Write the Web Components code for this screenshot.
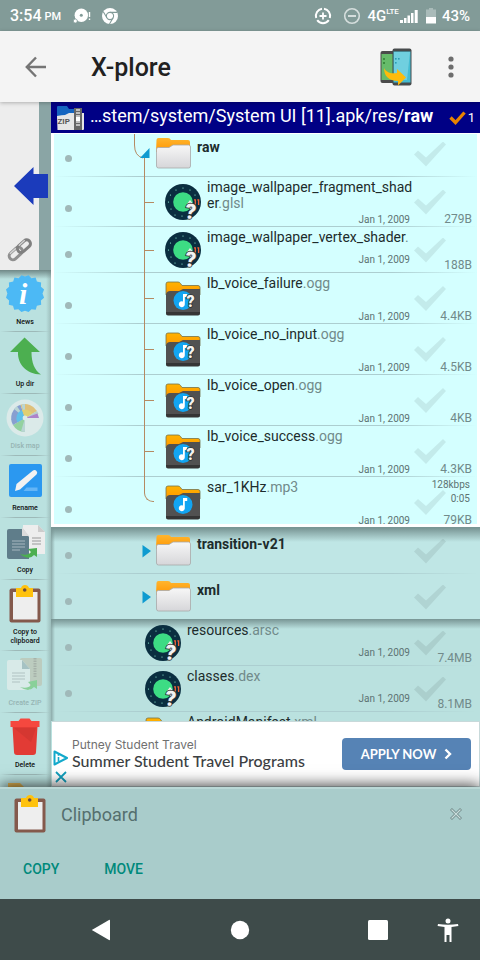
<!DOCTYPE html>
<html lang="en">
<head>
<meta charset="utf-8">
<meta name="viewport" content="width=device-width, initial-scale=1">
<title>X-plore</title>
<style>
html, body { margin: 0; height: 100%; }
body { font-family: Roboto, "Liberation Sans", sans-serif; background: #bae1df; color: #222; overflow: hidden; }
</style>
</head>
<body>
<xp-app></xp-app>
<script>
const define = (name, html, setup) => {
  const t = document.createElement('template');
  t.innerHTML = html;
  customElements.define(name, class extends HTMLElement {
    connectedCallback() {
      if (this.shadowRoot) return;
      this.attachShadow({ mode: 'open' }).append(t.content.cloneNode(true));
      if (setup) setup(this, this.shadowRoot);
    }
  });
};

const clipboard = `<rect x="3.500" y="3.500" width="31" height="34" rx="2" fill="#84594c"/><rect x="7" y="7" width="24.500" height="27.500" fill="#eee"/><path d="M10 3h5a4.200 4.200 0 0 1 8 0h4v9H10z" fill="#ffc20e"/><circle cx="18.700" cy="5" r="1.800" fill="#6b4b3f"/>`;
const sheetLines = `<path d="M0 0h13M0 3h13M0 6h13M0 9h8" stroke-width="1.200" fill="none"/>`;
const question = (x, y, s) => `<text x="${x}" y="${y}" font-family="Roboto" font-size="${s}" font-weight="900" fill="#f2f2f2" stroke="#333" stroke-width="1.600" paint-order="stroke">?</text>`;
const musicFolder = `<defs><linearGradient id="a" x2="0" y2="1"><stop stop-color="#ffb300"/><stop offset="1" stop-color="#ff9800"/></linearGradient></defs>
  <path d="M1 3q0-2 2-2h10q1.500 0 2.500 1.400L17 4.500h16q2 0 2 2V14H1z" fill="url(#a)" stroke="#73714a" stroke-width=".8"/>
  <path d="M1 13q1-3 4-3h9l4-2h17v24q0 2-2 2H3q-2 0-2-2z" fill="#515151"/><path d="M1 31h34v1q0 2.500-2 2.500H3q-2 0-2-2.500z" fill="#353535"/>
  <circle cx="18" cy="19.500" r="9.500" fill="#12a5f2"/><path d="M18 13h4.200v3h-2.400v7a3 3 0 1 1-1.800-2.500z" fill="#fff"/>`;

const ICONS = {
  data: ['0 0 18 18', `<path d="M8 1.800A7.200 7.200 0 0 0 2.200 11M3.200 13.200a7.200 7.200 0 0 0 11.600 0M15.800 11A7.200 7.200 0 0 0 10 1.800" fill="none" stroke="#fff" stroke-width="2"/><path d="M9 5.500v7M5.500 9h7" stroke="#fff" stroke-width="1.800"/>`],
  minus: ['0 0 18 18', `<circle cx="9" cy="9" r="7.300" fill="none" stroke="#d5dedd" stroke-width="1.600"/><path d="M5 9h8" stroke="#d5dedd" stroke-width="2"/>`],
  disc: ['0 0 18 16', `<circle cx="8.300" cy="7.300" r="6.700" fill="#fff"/><circle cx="8.300" cy="7.300" r="1.500" fill="#829b98"/><circle cx="2.300" cy="13" r="2" fill="#fff" stroke="#829b98" stroke-width=".7"/><path d="M16.500 4v5M16.500 10.500v1.500" stroke="#fff" stroke-width="1.400"/>`],
  chrome: ['0 0 18 18', `<circle cx="9" cy="9" r="8" fill="#fff"/><circle cx="9" cy="9" r="3.600" fill="#fff" stroke="#829b98" stroke-width="1.100"/><path d="M9 5.400h7.200M5.900 10.800 2.300 4.800M12.100 10.800 8.500 17" stroke="#829b98" stroke-width="1.100"/>`],
  signal: ['0 0 19 14', `<path d="M0 11h3v3H0zM4 9h2.500v5H4zM7.500 6.500H10V14H7.500zM11 4h2.500v10H11zM14.700 1h3V14h-3z" fill="#fff"/>`],
  battery: ['0 0 10 16', `<path d="M3 0h4v1.500h3V9H0V1.500h3z" fill="#a9bbb9"/><path d="M0 9h10v6.500H0z" fill="#fff"/>`],
  back: ['0 0 22 22', `<path d="M21 11H2M11 1.500 1.800 11 11 20.500" fill="none" stroke="#757575" stroke-width="2.400"/>`],
  phones: ['0 0 32 38', `<rect x=".5" y="3" width="17" height="32" rx="2" fill="#4b4b4b"/><rect x="1.500" y="6" width="15" height="26" fill="#66bb6a"/><rect x="12.500" y=".5" width="19" height="37" rx="2" fill="#474b4c"/><rect x="13.500" y="3.500" width="17" height="31" fill="#45bcd2"/><path d="M14 4h16L27 32H14z" fill="#70cfdf"/><g fill="#2a9db5"><rect x="15" y="10" width="1.600" height="1.600"/><rect x="18" y="10" width="1.600" height="1.600"/><rect x="15" y="14" width="1.600" height="1.600"/></g><path d="M3 11h2M3 15h2" stroke="#2e7d32" stroke-width="1.500"/><path d="M4 20c2 4 6 6 13 5v-4l9 8.500-8 8v-4.500C9 33 4 28 4 20z" fill="#fdbb0b"/>`],
  more: ['0 0 6 22', `<g fill="#6d6d6d"><circle cx="3" cy="3" r="2.600"/><circle cx="3" cy="11" r="2.600"/><circle cx="3" cy="19" r="2.600"/></g>`],
  zip: ['0 0 29 26', `<path d="M1 2q0-1 1-1h9l2 3h13v10H1z" fill="#1565c0"/><path d="M1 11q5-1 8-1l4-2h15v16q0 1-1 1H1.500z" fill="#e6e6e6"/><path d="M18 3h8v22h-8z" fill="#666"/><path d="M20 5h4M20 8h4M20 11h4M20 17h4M20 20h4" stroke="#ddd" stroke-width="1.600"/><path d="M20 12h4v4h-4z" fill="#fff"/><text x="1.500" y="19" font-family="Roboto" font-size="8" font-weight="700" fill="#555">ZIP</text>`],
  tick: ['0 0 17 14', `<path d="M1.500 6.500 6.500 11.500 15.500 1.500" fill="none" stroke="#e88300" stroke-width="3.300"/>`],
  link: ['0 0 28 26', `<g fill="none" transform="rotate(-42 14 13)"><rect x="1" y="9" width="15" height="7.500" rx="3.700" stroke="#909090" stroke-width="3"/><rect x="12" y="9" width="15" height="7.500" rx="3.700" stroke="#808080" stroke-width="3"/><path d="M4 9h8M16 9h8" stroke="#d4d4d4" stroke-width="1.400"/></g>`],
  arrow: ['0 0 34 38', `<path d="M0 19 19.500 0v7H34v24H19.500v7z" fill="#1b3bbb"/>`],
  news: ['0 0 38 38', `<path d="m19 1.500 3.600-1.200 2.800 3 4.200-.8 1.300 4 4.200 1-.2 4.300 3.200 2.800-1.600 4 1.600 4.200-3.200 2.600.3 4.300-4.300 1.100-1.200 4-4.200-.6-2.900 2.900-3.600-1.300-3.600 1.300-3-2.900-4.200.6-1.200-4-4.200-1.100.3-4.300L0 22.800l1.400-4.200L0 14.600l3.100-2.800-.2-4.300 4.300-1 1.200-4 4.200.8 2.900-3z" fill="#4cb9f5"/><text x="13" y="29" font-family="Liberation Serif" font-size="30" font-style="italic" font-weight="700" fill="#fff">i</text>`],
  up: ['0 0 38 38', `<path d="M18.500.5 34 15h-8.500c0 11 3 18 9.500 22.500C20 37 11.500 27 12 15H4z" fill="#4caf50"/>`],
  map: ['0 0 38 38', `<circle cx="19" cy="19" r="18.500" fill="#dbeae9"/><path d="M19 19V33A14 14 0 0 1 7 26z" fill="#93d1a0"/><path d="M19 19 7 26A14 14 0 0 1 14.500 5.800z" fill="#879fd0"/><path d="M19 19 14.500 5.800A14 14 0 0 1 31 12z" fill="#dfc07a"/><path d="M19 19 31 12a14 14 0 0 1 1.500 3z" fill="#b9cfcc"/><path d="M19 19 8 10l3-2.700zM19 19 15.500 5.500 19 5zM19 19V33l-4-.6z" fill="#b9d5d4"/><path d="m19 19-7.600 4.200A8.600 8.600 0 0 1 16 11z" fill="#5ec0ea"/><path d="M19 19 16 11a8.600 8.600 0 0 1 10.400 3.600z" fill="#e0cf72"/><path d="M19 19 31.500 14.500 33 19z" fill="#ad83ca"/><circle cx="19" cy="19" r="2.400" fill="#dbeae9"/>`],
  rename: ['0 0 38 38', `<rect x="3" y="3" width="33" height="33" rx="2" fill="#2b98f0"/><path d="m9.500 28 1-5L27 9.500q2-1.300 3.500.5t0 3.500L14 28.500l-5 1.500z" fill="#f2f2f2"/><path d="M20.500 26.500h11V30H17.500z" fill="#64b5f6"/>`],
  copy: ['0 0 38 38', `<path d="M17 2h15l7 7v22H17z" fill="#ededed"/><path d="M32 2v7h7z" fill="#ccc"/><path d="M26 15h9M26 18h9M26 21h9" stroke="#999"/><path d="M3 6h14l6 8v22H3q-2 0-2-2V8q0-2 2-2z" fill="#5f7d8a"/><path d="M16 4v9h7z" fill="#dcdcdc"/><g transform="translate(6 18)" stroke="#a7b8bf">${sheetLines}</g><path d="M14 31q8 2 11-2l-3-3 9-1v9l-3-2q-5 6-14-1z" fill="#4caf50"/>`],
  clipboard: ['0 0 38 38', clipboard],
  zipmake: ['0 0 38 38', `<rect x="14" y="2" width="22" height="28" rx="2" fill="#bcccbf"/><path d="M29 2v20" stroke="#a6b2aa" stroke-width="3" stroke-dasharray="1.500 1"/><path d="M3 4h13l8 9v21H3q-2 0-2-2V6q0-2 2-2z" fill="#d8eae8"/><path d="M16 4v9h8z" fill="#a5c2c3"/><g transform="translate(6 17)" stroke="#b0c2c2">${sheetLines}</g><path d="M14 31q8 2 11-2l-3-3 9-2v9l-3-2q-5 6-14 0z" fill="#89d099"/>`],
  trash: ['0 0 38 38', `<path d="M6.500 8h25L30 34q0 3-3 3H11q-3 0-3-3z" fill="#e23b35"/><path d="m8 10 17 14L30 10z" fill="#c7332e" opacity=".5"/><path d="M4.500 3h8l2-2.500h9l2 2.500h8v6h-29z" fill="#f5483f"/>`],
  folderbit: ['0 0 38 38', `<path d="M2 3h12l5 5h17v14H2z" fill="#e9ba57"/>`],
  folder: ['0 0 36 36', `<defs><linearGradient id="o" x2="0" y2="1"><stop stop-color="#ffb52e"/><stop offset="1" stop-color="#ff9500"/></linearGradient><linearGradient id="w" x2="0" y2="1"><stop stop-color="#f7f7f7"/><stop offset="1" stop-color="#d6d6d9"/></linearGradient></defs><path d="M1.500 4q0-2 2-2h9.500q2 0 3 2h17q2 0 2 2v10h-34z" fill="url(#o)"/><path d="M1.500 13q0-1.500 2-1.500H14L18 9h15.500q2 0 2 2v19q0 2-2 2h-30q-2 0-2-2z" fill="url(#w)" stroke="#a8a8a8" stroke-width=".8"/>`],
  android: ['0 0 36 36', `<circle cx="18" cy="18" r="18" fill="#0a2e40"/><g fill="#9fd"><circle cx="18" cy="4" r=".6"/><circle cx="11" cy="6" r=".6"/><circle cx="25" cy="6" r=".6"/><circle cx="5.500" cy="11" r=".6"/><circle cx="3.500" cy="18" r=".6"/><circle cx="6" cy="25" r=".6"/><circle cx="10" cy="31" r=".6"/><circle cx="17" cy="32" r=".6"/><circle cx="30" cy="11" r=".6"/></g><circle cx="18" cy="18" r="9.800" fill="#3ddc84"/><path d="M29 15.800h1.300V21M32.300 15.800h1.300V21" fill="none" stroke="#ef6136" stroke-width="1.300"/><path d="M22 20 25 16l4 5v5h-3z" fill="#eee"/><g transform="rotate(8 27 26)">${question(20.5, 35, 21)}</g>`],
  audioq: ['0 0 36 36', musicFolder + question(21.5, 25.5, 16)],
  audio: ['0 0 36 36', musicFolder],
  adinfo: ['0 0 16 16', `<path d="M1.500 1.500 14 8 1.500 14.500z" fill="#fff" stroke="#12a9cb" stroke-width="2" stroke-linejoin="round"/><path d="M5.500 7v4.500M5.500 4v1.800" stroke="#12a9cb" stroke-width="1.600"/>`],
  adclose: ['0 0 12 12', `<path d="m1 1 10 10M11 1 1 11" stroke="#129fbd" stroke-width="1.800"/>`],
  chevron: ['0 0 8 12', `<path d="m1.500 1.500 4.500 4.500-4.500 4.500" fill="none" stroke="#fff" stroke-width="2.400"/>`],
  close: ['0 0 12 12', `<path d="m1 1 10 10M11 1 1 11" stroke="#6e8786" stroke-width="2.800"/><path d="m1.500 1.500 9 9M10.500 1.500l-9 9" stroke="#c9dddc" stroke-width="1.200"/>`],
  navback: ['0 0 20 22', `<path d="M.8 11 18 1q1-.5 1 .5v19q0 1-1 .5z" fill="#fff"/>`],
  navhome: ['0 0 20 20', `<circle cx="10" cy="10" r="9.200" fill="#fff"/>`],
  navrecent: ['0 0 20 20', `<rect width="20" height="20" rx="1.500" fill="#fff"/>`],
  person: ['0 0 22 24', `<circle cx="11" cy="3" r="2.500" fill="#fff"/><path d="M1 6q10 1.500 20 0l.4 2-6.900 1v15h-2v-7h-3v7h-2V9L.6 8z" fill="#fff"/>`]
};

/* Inline SVG glyph, drawn at its own viewBox size */
define('xp-icon', `<style>:host{display:block;flex:none;line-height:0}svg{display:block;overflow:visible}</style><svg aria-hidden="true"></svg>`, (el, root) => {
  const [box, body] = ICONS[el.getAttribute('name')];
  const svg = root.querySelector('svg'), [, , w, h] = box.split(' ');
  svg.setAttribute('viewBox', box);
  svg.setAttribute('width', w);
  svg.setAttribute('height', h);
  svg.innerHTML = body;
});

const makeIcon = name => {
  const icon = document.createElement('xp-icon');
  icon.setAttribute('name', name);
  return icon;
};

define('status-bar', `<style>
:host{display:flex;align-items:center;height:31px;padding:0 10px;background:#829b98;color:#fff;font-size:16px;font-weight:500}
.pm{font-size:11px;margin:2px 12px 0 3px}
.gap{flex:1}
sup{font-size:8px;align-self:flex-start;margin-top:7px;line-height:10px}
</style><span>3:54</span><span class="pm">PM</span><xp-icon name="disc"></xp-icon><xp-icon name="chrome" style="margin-left:10px"></xp-icon>
<span class="gap"></span><xp-icon name="data"></xp-icon><xp-icon name="minus" style="margin:0 6px 0 11px"></xp-icon><span style="font-size:15px">4G</span><sup>LTE</sup><xp-icon name="signal" style="margin:0 7px 0 1px"></xp-icon><xp-icon name="battery"></xp-icon><span style="margin-left:6px;font-size:15px">43%</span>`);

define('title-bar', `<style>
:host{display:flex;align-items:center;height:71px;background:#f4f4f4;box-shadow:0 1px 4px #0004;z-index:2;padding:0 18px 0 17px}
button{border:0;background:none;padding:8px;margin:0;display:block}
h1{flex:1;margin:2px 0 0 36px;font-size:25px;font-weight:500;color:#212121}
</style><button aria-label="Back"><xp-icon name="back"></xp-icon></button><h1><slot></slot></h1><button aria-label="Other panel"><xp-icon name="phones"></xp-icon></button><button aria-label="More options" style="margin-left:20px"><xp-icon name="more"></xp-icon></button>`);

define('side-panel', `<style>
:host{display:block}
button{width:100%;height:168px;border:0;margin:0;padding:0 3px 7px 6px;box-sizing:border-box;display:grid;grid-template-rows:1fr auto;background:linear-gradient(to right,#ededed 39px,#8aa5a5 39px)}
.a{align-self:end;justify-self:end;margin-bottom:32px}
</style><button aria-label="Switch panel"><xp-icon class="a" name="arrow"></xp-icon><xp-icon name="link"></xp-icon></button>`);

define('tool-button', `<style>
:host{display:block;background:linear-gradient(to right,transparent,#9db9b8 30%,#9db9b8 70%,transparent) bottom/100% 1px no-repeat}
button{all:unset;box-sizing:border-box;width:100%;display:flex;flex-direction:column;align-items:center;padding:5px 1px 5px 0;font-size:7px;font-weight:500;line-height:9px;color:#111;text-align:center}
span{margin-top:5px;width:44px;min-height:9px}
:host([disabled]) button{color:#96b4b3}
</style><button><span><slot></slot></span></button>`, (el, root) => {
  const button = root.querySelector('button');
  button.disabled = el.hasAttribute('disabled');
  button.prepend(makeIcon(el.getAttribute('icon')));
  if (!el.textContent) button.setAttribute('aria-label', 'New folder');
});

define('tool-list', `<style>
:host{display:block;flex:1;min-height:0;overflow:hidden;background:linear-gradient(#6f8887,transparent 9px),linear-gradient(to right,transparent 46px,#9dbebc),#bae1df}
</style><slot></slot>`);

define('path-bar', `<style>
:host{display:flex;align-items:center;height:31px;flex:none;padding:0 5px;background:#000085;color:#fff;font-size:18px;line-height:24px;white-space:nowrap}
span{flex:1;margin:0 5px;padding-bottom:3px;min-width:0;overflow:hidden}
small{font-size:13px;margin:0 0 0 2px}
</style><xp-icon name="zip"></xp-icon><span><slot></slot></span><xp-icon name="tick"></xp-icon><small>1</small>`);

/* A run of rows; "current" marks the open directory */
define('file-group', `<style>
:host{display:block;flex:none;overflow:hidden;padding:1px 3px 0;background:linear-gradient(#789594,#789594 1px,transparent 15px),linear-gradient(to right,#8caaa9,transparent 4px),#bfe6e5}
:host([current]){padding:0;border:3px solid #fff;border-top-width:1px;background:#d4ffff}
:host([rest]){flex:1;min-height:0;margin-top:-1px;background:linear-gradient(#789594,transparent 10px),linear-gradient(to right,#8caaa9,transparent 4px),#bae1df}
</style><slot></slot>`);

define('file-row', `<style>
:host{display:grid;grid-template-columns:80px auto 36px minmax(0,1fr) 59px;min-height:46px;padding-right:5px;background:linear-gradient(to right,transparent,#acced0 20%,#acced0 80%,transparent) bottom/100% 1px no-repeat}
:host([tall]){min-height:51px}
:host([wrap]){min-height:50px}
:host([first]){margin-top:-3px}
:host([last]){margin-bottom:-4px;background:none}
.dot{width:7px;height:7px;border-radius:50%;background:#a0b9b9;align-self:end;margin:0 0 15px 11px}
.tree{width:11px;display:block}
:host([level=folder]) .tree{width:21px}
:host([level=child]) .tree{width:31px;display:grid;align-items:center;background:linear-gradient(#b58a62,#b58a62) 10px 0/1px 100% no-repeat}
:host([level=child]) .tree::before{content:"";height:1px;width:9px;margin-left:11px;background:#b58a62}
:host([level=child][last]) .tree{background:none;align-items:start}
:host([level=child][last]) .tree::before{height:25px;width:10px;margin-left:10px;box-sizing:border-box;background:none;border:solid #b58a62;border-width:0 0 1px 1px;border-bottom-left-radius:9px}
.tree svg{display:none}
:host([open]) .open,:host([closed]) .closed{display:block}
.icon{align-self:center}
.text{display:flex;flex-direction:column;justify-content:space-between;padding:2px 0 6px 6px}
:host([tall]) .text,:host([wrap]) .text{padding-bottom:0}
:host([level=folder]) .text{padding-top:8px}
.name{font-size:14px;line-height:16px;color:#1d2c2c;word-break:break-all;white-space:normal;margin-right:-4px}
:host([level=folder]) .name{font-weight:700}
.name i,.date,.size,.extra{font-style:normal;color:#718a8a}
.date{font-size:10px;line-height:14px;text-align:right;padding-right:3px;color:#5d7373}
.meta{display:grid}
.meta>*{grid-area:1/1}
input{appearance:none;margin:0 0 0 1px;width:32px;height:25px;align-self:center;background:#0003;opacity:.4;clip-path:polygon(4px 9px,0 13px,12px 25px,32px 3px,29px 0,12px 16px)}
.size{align-self:end;justify-self:end;font-size:12px;line-height:16px}
.extra{justify-self:end;text-align:right;font-size:10px;line-height:14px;padding:1px 2px 0 0;white-space:pre-line;color:#5d7373}
</style>
<span class="dot"></span>
<span class="tree"><svg class="open" width="21" height="46"><path d="M.5 0V14Q.5 25 9 27M10.500 27V46" fill="none" stroke="#b58a62"/><path d="M6 27 15.500 17V27z" fill="#0e9bd0"/></svg><svg class="closed" width="21" height="46"><path d="M8.500 17 17 23 8.500 29.500z" fill="#0e9bd0"/></svg></span>
<span class="icon"></span>
<span class="text"><span class="name"><slot></slot><i></i></span><span class="date"></span></span>
<span class="meta"><input type="checkbox"><span class="extra"></span><span class="size"></span></span>`, (el, root) => {
  root.querySelector('.icon').append(makeIcon(el.getAttribute('icon')));
  root.querySelector('i').textContent = el.getAttribute('ext') || '';
  for (const key of ['date', 'size', 'extra']) {
    const node = root.querySelector('.' + key), value = el.getAttribute(key);
    if (value) node.textContent = value; else if (key !== 'date') node.remove();
  }
  root.querySelector('input').setAttribute('aria-label', 'Select ' + el.textContent);
});

define('ad-banner', `<style>
:host{display:flex;align-items:center;flex:none;height:64px;margin-left:1px;padding:0 8px 0 1px;background:#fff;border:1px solid #c8d9da;border-width:1px 1px 1px 0;font-family:Lato,sans-serif}
.opts{display:flex;flex-direction:column;align-items:center;gap:5px;align-self:end;padding-bottom:3px}
.opts button{all:unset}
.copy{flex:1;min-width:0;margin-left:3px;white-space:nowrap}
p{margin:0;font:12px/14px Inter,sans-serif;color:#707070}
strong{display:block;font-size:16px;line-height:18px;font-weight:500;color:#3c4043}
a{display:flex;align-items:center;justify-content:center;gap:8px;width:129px;height:32px;border-radius:4px;background:#5683b5;color:#fff;font-size:13px;font-weight:700;text-decoration:none}
</style><div class="opts"><button aria-label="Ad choices"><xp-icon name="adinfo"></xp-icon></button><button aria-label="Close ad"><xp-icon name="adclose"></xp-icon></button></div>
<div class="copy"><p>Putney Student Travel</p><strong>Summer Student Travel Programs</strong></div><a href="#apply">APPLY NOW<xp-icon name="chevron"></xp-icon></a>`);

define('clipboard-sheet', `<style>
:host{display:block;position:relative;z-index:3;flex:none;height:112px;background:#a9cccb;box-shadow:0 -2px 14px #000b;border-top:2px solid #bad8d6;box-sizing:border-box}
header{display:flex;align-items:center;height:50px;padding:0 18px 0 11px}
h2{flex:1;margin:0 0 0 12px;font-size:18px;font-weight:400;color:#556f6e}
button{all:unset}
div{display:flex;gap:45px;padding:20px 23px;font-size:14px;line-height:20px;font-weight:500;color:#00897b}
</style><header><xp-icon name="clipboard"></xp-icon><h2>Clipboard</h2><button aria-label="Close"><xp-icon name="close"></xp-icon></button></header><div><button>COPY</button><button>MOVE</button></div>`);

define('nav-bar', `<style>
:host{display:grid;grid-template-columns:77fr 48px 91fr 48px 90fr 48px 22px 48px 8px;height:61px;flex:none;background:#3e4b4a;position:relative;z-index:4}
button{all:unset;display:grid;place-items:center}
</style><span></span><button aria-label="Back"><xp-icon name="navback"></xp-icon></button><span></span><button aria-label="Home"><xp-icon name="navhome"></xp-icon></button><span></span><button aria-label="Recent"><xp-icon name="navrecent"></xp-icon></button><span></span><button aria-label="Accessibility"><xp-icon name="person"></xp-icon></button>`);

define('xp-app', `<style>
:host{display:flex;flex-direction:column;height:100vh}
main{flex:1;min-height:0;display:grid;grid-template-columns:51px minmax(0,1fr)}
aside,section{display:flex;flex-direction:column;min-height:0;overflow:hidden}
</style>
<status-bar></status-bar>
<title-bar>X-plore</title-bar>
<main>
<aside><side-panel></side-panel><tool-list>
<tool-button icon="news">News</tool-button>
<tool-button icon="up">Up dir</tool-button>
<tool-button icon="map" disabled>Disk map</tool-button>
<tool-button icon="rename">Rename</tool-button>
<tool-button icon="copy">Copy</tool-button>
<tool-button icon="clipboard">Copy to clipboard</tool-button>
<tool-button icon="zipmake" disabled>Create ZIP</tool-button>
<tool-button icon="trash">Delete</tool-button>
<tool-button icon="folderbit"></tool-button>
</tool-list></aside>
<section>
<path-bar>…stem/system/System UI [11].apk/res/<b>raw</b></path-bar>
<file-group current>
<file-row level="folder" icon="folder" open first>raw</file-row>
<file-row level="child" icon="android" wrap ext=".glsl" date="Jan 1, 2009" size="279B">image_wallpaper_fragment_shader</file-row>
<file-row level="child" icon="android" ext="." date="Jan 1, 2009" size="188B">image_wallpaper_vertex_shader</file-row>
<file-row level="child" icon="audioq" tall ext=".ogg" date="Jan 1, 2009" size="4.4KB">lb_voice_failure</file-row>
<file-row level="child" icon="audioq" tall ext=".ogg" date="Jan 1, 2009" size="4.5KB">lb_voice_no_input</file-row>
<file-row level="child" icon="audioq" tall ext=".ogg" date="Jan 1, 2009" size="4KB">lb_voice_open</file-row>
<file-row level="child" icon="audioq" tall ext=".ogg" date="Jan 1, 2009" size="4.3KB">lb_voice_success</file-row>
<file-row level="child" icon="audio" tall last ext=".mp3" date="Jan 1, 2009" size="79KB" extra="128kbps&#10;0:05">sar_1KHz</file-row>
</file-group>
<file-group>
<file-row level="folder" icon="folder" closed>transition-v21</file-row>
<file-row level="folder" icon="folder" closed>xml</file-row>
</file-group>
<file-group rest>
<file-row icon="android" ext=".arsc" date="Jan 1, 2009" size="7.4MB">resources</file-row>
<file-row icon="android" ext=".dex" date="Jan 1, 2009" size="8.1MB">classes</file-row>
<file-row icon="audio" ext=".xml">AndroidManifest</file-row>
</file-group>
<ad-banner></ad-banner>
</section>
</main>
<clipboard-sheet></clipboard-sheet>
<nav-bar></nav-bar>`);
</script>
</body>
</html>
